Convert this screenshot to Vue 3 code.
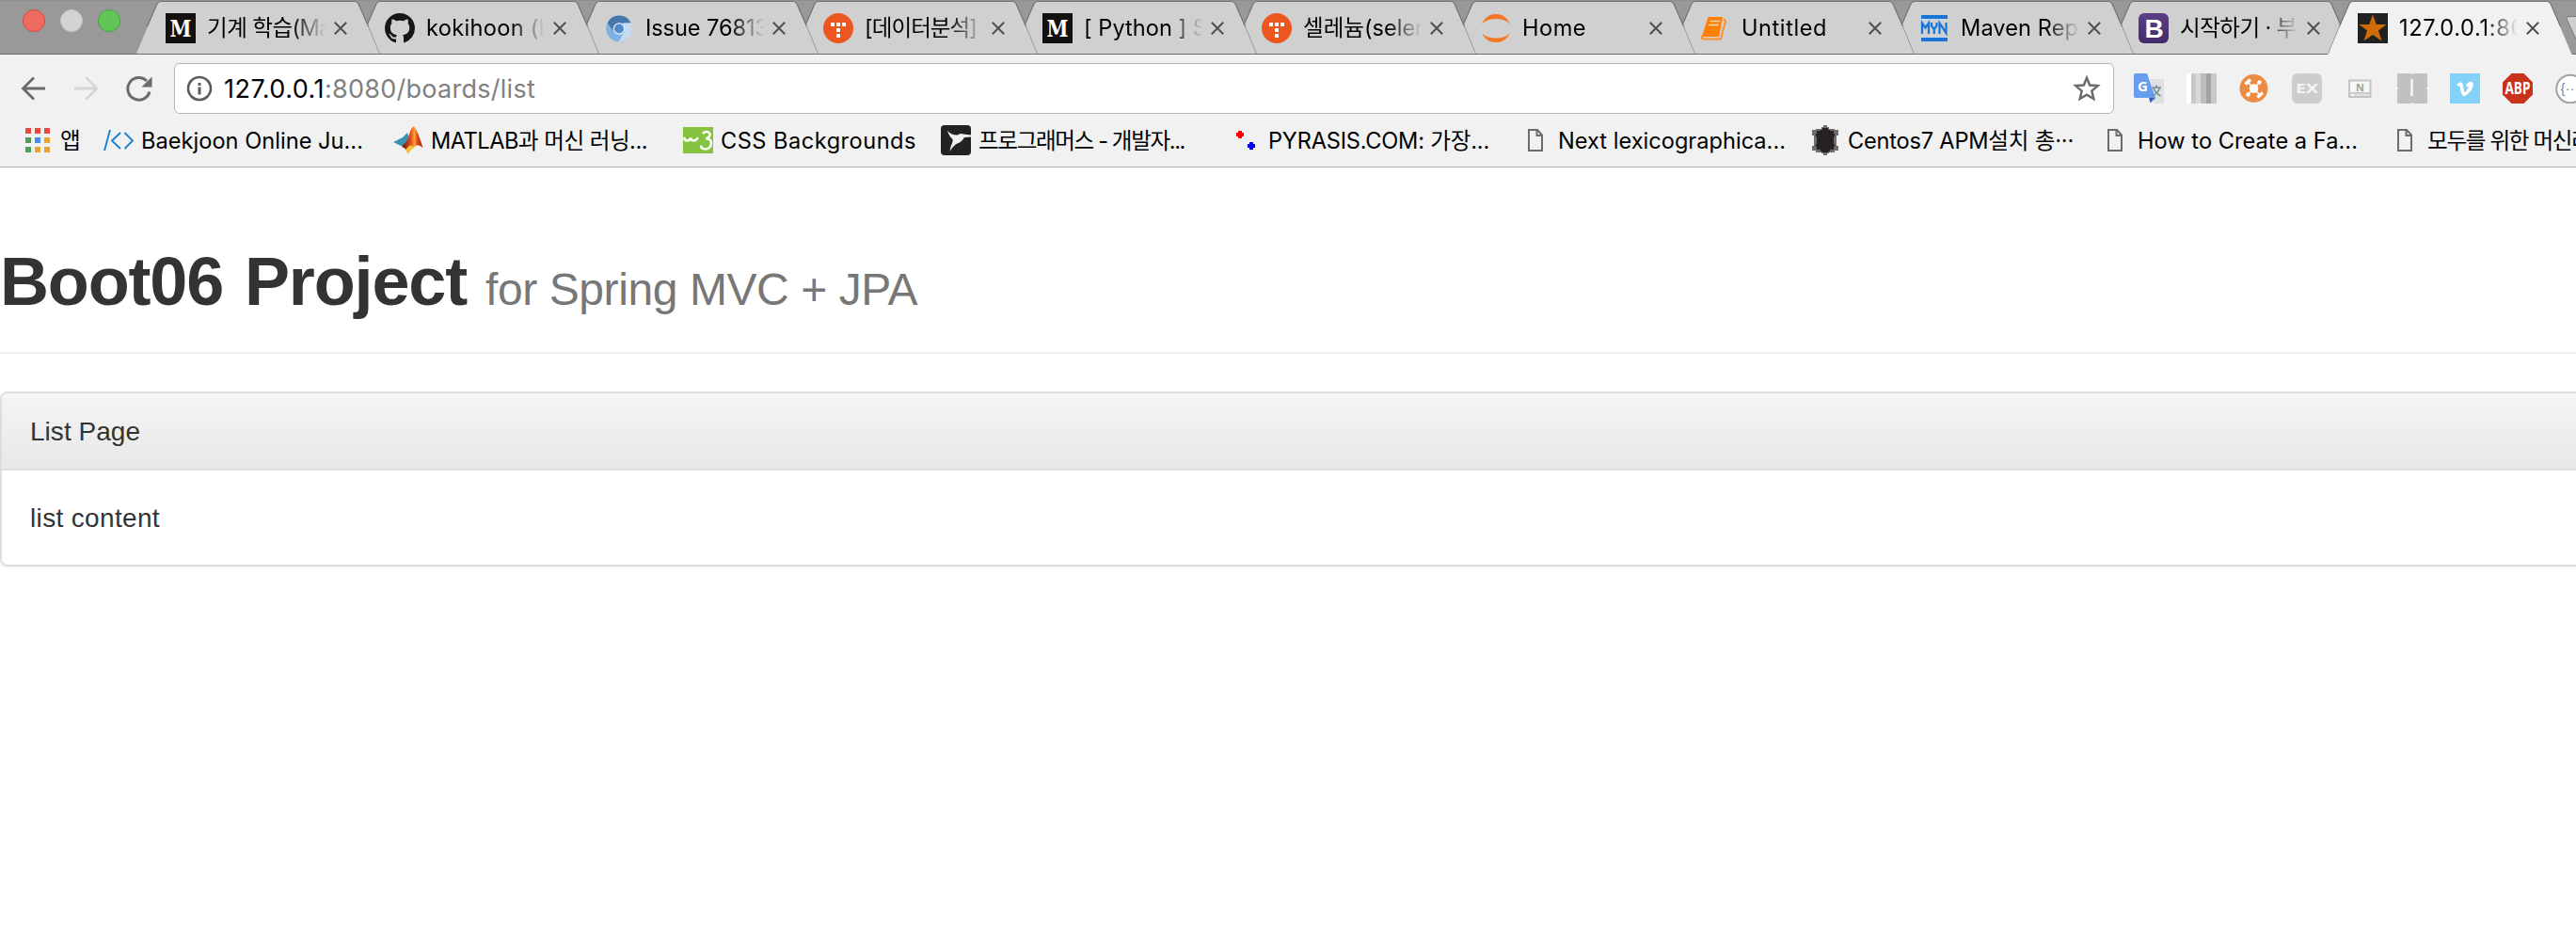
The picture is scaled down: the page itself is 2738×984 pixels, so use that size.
<script setup>
const icons = {
  medium: '<rect width="32" height="32" fill="#12110f"/><text x="16" y="24.5" font-size="24" font-weight="700" font-family="DejaVu Serif, serif" fill="#fff" text-anchor="middle" textLength="23" lengthAdjust="spacingAndGlyphs">M</text>',
  github: '<path transform="scale(2)" fill="#181616" d="M8 0C3.58 0 0 3.58 0 8c0 3.54 2.29 6.53 5.47 7.59.4.07.55-.17.55-.38 0-.19-.01-.82-.01-1.49-2.01.37-2.53-.49-2.69-.94-.09-.23-.48-.94-.82-1.13-.28-.15-.68-.52-.01-.53.63-.01 1.08.58 1.23.82.72 1.21 1.87.87 2.33.66.07-.52.28-.87.51-1.07-1.78-.2-3.64-.89-3.64-3.95 0-.87.31-1.59.82-2.15-.08-.2-.36-1.02.08-2.12 0 0 .67-.21 2.2.82.64-.18 1.32-.27 2-.27.68 0 1.36.09 2 .27 1.53-1.04 2.2-.82 2.2-.82.44 1.1.16 1.92.08 2.12.51.56.82 1.27.82 2.15 0 3.07-1.87 3.75-3.65 3.95.29.25.54.73.54 1.48 0 1.07-.01 1.93-.01 2.2 0 .21.15.46.55.38A8.013 8.013 0 0016 8c0-4.42-3.58-8-8-8z"/>',
  chromium: '<circle cx="16" cy="16.5" r="13.8" fill="#7eb0e0"/><path d="M3.6 10.5A13.8 13.8 0 0 1 28.6 10.5H16L10 19z" fill="#4677ab"/><path d="M28.6 10.5A13.8 13.8 0 0 1 15.5 30.3L22 19.5 20.5 10.5z" fill="#c5dbf0"/><circle cx="16" cy="16.5" r="6.3" fill="#e3eef8"/><circle cx="16" cy="16.5" r="5" fill="#4f8acb"/>',
  tistory: '<circle cx="16" cy="16" r="16" fill="#ec571f"/><path fill="#fff" d="M8 10h4v4h-4zM14 10h4v4h-4zM20 10h4v4h-4zM14 16h4v4h-4zM14 22h4v4h-4z"/>',
  jupyter: '<path fill="#f37726" d="M1 11.500C4.500 4 9.500 1 16 1s11.500 3 15 10.500C27 7.800 22 6 16 6S5 7.800 1 11.500zM1 21.500C5 25 10 26.500 16 26.500s11-1.500 15-5C27.500 28 22.500 31 16 31S4.500 28 1 21.500z"/>',
  book: '<path d="M8.500 4H24L20 25H2z" fill="#ff8000"/><path d="M25 6.500l2 2-5 19H3.500Q1 27 2 24" fill="none" stroke="#ff8f26" stroke-width="2"/><path d="M10.500 8.500H21M9.500 12.500H20" stroke="#ead8c3" stroke-width="1.6"/>',
  maven: '<path d="M2 2h28v4H2zM2 26h28v4H2z" fill="#1976d8"/><path d="M2 6h28v1H2zM2 24.500h28v1.500H2z" fill="#c7d7e8"/><path d="M3 22V10.500L6.500 15.500L10 10.500V22M13 10V13.500L15.800 17L18.500 13.500V10M15.800 16V22M21.500 22V10.500L28.500 21V10" fill="none" stroke="#1976d8" stroke-width="2.200"/>',
  bootstrap: '<defs><linearGradient id="boot" x2="0" y2="1"><stop stop-color="#5c3f86"/><stop offset="1" stop-color="#432a69"/></linearGradient></defs><rect width="32" height="32" rx="6" fill="url(#boot)"/><text x="16.500" y="26" text-anchor="middle" font-family="Liberation Sans, sans-serif" font-weight="700" font-size="28" fill="#fff">B</text>',
  star: '<rect width="32" height="32" fill="#212121"/><path d="M16 1.500L19.800 12H30.500L22 18.500L25.500 29.500L16 23L6.500 29.500L10 18.500L1.500 12H12.200z" fill="#ce6c08"/>',
  apps: '<path fill="#e34b41" d="M1 3h6v6H1zM11 3h6v6h-6zM21 3h6v6h-6z"/><path fill="#539b5c" d="M1 13h6v6H1zM1 23h6v6H1z"/><path fill="#448bf0" d="M11 13h6v6h-6z"/><path fill="#e6a435" d="M21 13h6v6h-6zM11 23h6v6h-6zM21 23h6v6h-6z"/>',
  code: '<path d="M7 5L1 27M18 8L9 16.500L18 25M22.500 8L31 16.500L22.500 25" fill="none" stroke="#1583cc" stroke-width="1.9"/>',
  matlab: '<defs><linearGradient id="mat"><stop stop-color="#68150c"/><stop offset=".45" stop-color="#e8531c"/><stop offset=".6" stop-color="#ffa33b"/><stop offset=".75" stop-color="#d8461a"/><stop offset="1" stop-color="#a7240f"/></linearGradient></defs><path d="M0 18L10 13L15 8L17 14L12 21L8 22z" fill="#3793b2"/><path d="M10 21Q14 19 16 13Q19 2 22 1Q26 6 31.500 24Q27 20 24 22Q18 26 15.500 30Q13 24 9 23z" fill="url(#mat)"/><path d="M13 26L15.500 30Q18 26 22 23.500L18 21z" fill="#ffc032"/>',
  w3: '<rect y="2" width="32" height="28" fill="#86c440"/><path d="M1 13q1 4 4 3.500q2.500-.5 3-3q.5 3 3.500 3q3 0 4-3.500M21 9q2-3 6-1.500q3 2 .5 5l-3 2q5-.5 5.500 4.500q-.5 6-6 6.500q-5 0-5-4" fill="none" stroke="#fff" stroke-width="2.400"/>',
  bird: '<rect width="32" height="32" rx="4" fill="#222"/><path d="M7 6Q12 11 18 10.500Q20 8 24 9.500L32 10.500V12.500L25 13Q23 17 20 18.500Q14 20 9.500 28Q10 23 12 19Q13 17 12.500 15Q9 12 7 6z" fill="#f2f2f2"/>',
  dots: '<path fill="#f00" d="M8 6h4v2h2v4h-2v2H8v-2H6V8h2z"/><path fill="#00f" d="M20 18h4v2h2v4h-2v2h-4v-2h-2v-4h2z"/>',
  page: '<path d="M9 5H18L23 10.500V27H9zM17.500 5V11H23" fill="none" stroke="#6c6c6c" stroke-width="2"/>',
  turtle: '<path d="M12 2h2V0h4v2h2v2h6v1h4v6h-2v11h2v5h-4v2h-6v1h-2v2h-4v-2h-2v-1H6v-2H2v-5h2V11H2V5h4V4h6z" fill="#6f6c6e"/><path d="M11 5h2V3h6v2h2v1h4v3h1v3h-1v8h1v3h-1v3h-4v2h-2v1h-6v-1h-2v-2H7v-3H6v-3h1v-8H6V9h1V6h4z" fill="#262223"/>',
  translate: '<path d="M17 6h15v26H21z" fill="#dfe0e1"/><path d="M0 2Q0 0 2 0H14L23 26H2Q0 26 0 24z" fill="#679cee"/><path d="M16 26H23L17.500 31.500z" fill="#3b65bd"/><text x="4" y="19" font-family="Open Sans, sans-serif" font-size="15" font-weight="700" fill="#fff">G</text><path d="M19.500 15H29M24 12.500V15M21 15.500Q23 21 28.500 24M27.500 15.500Q25 21.500 20 24" stroke="#74909b" stroke-width="1.6" fill="none"/>',
  bars: '<path fill="#fff" d="M0 0h5v32H0z"/><path fill="#c9c9c9" d="M5 0h5v32H5z"/><path fill="#dadada" d="M10 0h5v32h-5z"/><path fill="#bdbdbd" d="M15 0h6v32h-6z"/><path fill="#a2a2a2" d="M21 0h5v32h-5z"/><path fill="#c8c8c8" d="M26 0h6v32h-6z"/>',
  orange: '<circle cx="15.500" cy="16" r="15" fill="#ec8b44"/><circle cx="15.500" cy="16" r="4.800" fill="#fff"/><path d="M9 9L22 23M22 9L9 23" stroke="#fff" stroke-width="1.500"/><path d="M6.500 11.500L12 6.500M19.500 25.500L25 20.500" stroke="#fff" stroke-width="3.600"/><circle cx="21.500" cy="9.500" r="2.200" fill="#fff"/><circle cx="9.500" cy="22.500" r="2.200" fill="#fff"/>',
  ex: '<rect width="32" height="32" rx="6" fill="#cdcdcd"/><text x="4" y="21" textLength="24" lengthAdjust="spacingAndGlyphs" font-family="Open Sans, sans-serif" font-weight="700" font-size="14" fill="#f4f4f4">EX</text>',
  note: '<path d="M5 7.500h22.500V25H5zM5 21h22.500" fill="#f6f6f6" stroke="#c4c4c4" stroke-width="2"/><path d="M6 21.500H26.500V24H6z" fill="#dedede"/><text x="12" y="18.500" font-family="Open Sans, sans-serif" font-weight="700" font-size="11" fill="#a0a0a0">N</text><circle cx="8.500" cy="23" r="1.2" fill="#fff"/>',
  info: '<path d="M1 0H15V1H17V0H31L32 1V15H31V17H32V31L31 32H17V31H15V32H1L0 31V17H1V15H0V1z" fill="#c1c1c1"/><path d="M15.500 6V24" stroke="#f4f4f4" stroke-width="2.600"/>',
  vimeo: '<rect width="32" height="32" fill="#83d1f8"/><path d="M7 12Q12 7 13.500 11L15 19Q16 22 19.500 15Q20 13 17 13.500Q19 8 23 9Q27 11 22.500 18Q17 25 14 24Q11.500 22 10.500 13.500L8 13.500z" fill="#fff"/>',
  abp: '<path d="M9.500 0h13L32 9.500v13L22.500 32h-13L0 22.500v-13z" fill="#c9321b"/><text x="2.500" y="21.800" textLength="27" lengthAdjust="spacingAndGlyphs" font-family="Open Sans, sans-serif" font-weight="700" font-size="17" fill="#fff">ABP</text>',
  json: '<circle cx="16" cy="16.500" r="14.800" fill="#fff" stroke="#a1a1a1" stroke-width="2"/><text x="5.500" y="20.500" font-family="Liberation Sans, sans-serif" font-size="15" fill="#888">{···}</text>',
}

const tabs = [
  { icon: 'medium', title: '기계 학습(Ma', w: 132 },
  { icon: 'github', title: 'kokihoon (h', w: 134 },
  { icon: 'chromium', title: 'Issue 76813', w: 131 },
  { icon: 'tistory', title: '[데이터분석]', w: 119 },
  { icon: 'medium', title: '[ Python ] S', w: 131 },
  { icon: 'tistory', title: '셀레늄(selen', w: 133 },
  { icon: 'jupyter', title: 'Home', w: 68 },
  { icon: 'book', title: 'Untitled', w: 91 },
  { icon: 'maven', title: 'Maven Rep', w: 125 },
  { icon: 'bootstrap', title: '시작하기 · 부', w: 124 },
  { icon: 'star', title: '127.0.0.1:80', w: 134, active: true },
]

const bookmarks = [
  { icon: 'apps', title: '앱', w: 20, kind: 'apps' },
  { icon: 'code', title: 'Baekjoon Online Ju...', w: 236 },
  { icon: 'matlab', title: 'MATLAB과 머신 러닝...', w: 230 },
  { icon: 'w3', title: 'CSS Backgrounds', w: 208, kind: 'short' },
  { icon: 'bird', title: '프로그래머스 - 개발자...', w: 219 },
  { icon: 'dots', title: 'PYRASIS.COM: 가장...', w: 235 },
  { icon: 'page', title: 'Next lexicographica...', w: 242 },
  { icon: 'turtle', title: 'Centos7 APM설치 총···', w: 240 },
  { icon: 'page', title: 'How to Create a Fa...', w: 234 },
  { icon: 'page', title: '모두를 위한 머신러닝', w: 194 },
]

const extensions = ['translate', 'bars', 'orange', 'ex', 'note', 'info', 'vimeo', 'abp', 'json']

// Tracks the label so that it occupies the given width.
const vFit = {
  mounted(el, { value }) {
    const natural = el.getBoundingClientRect().width
    el.style.letterSpacing = `${(value - natural) / el.textContent.length}px`
  },
}
</script>

<template>
  <div class="window">
    <header class="strip">
      <div class="lights"><i class="light red"></i><i class="light gray"></i><i class="light green"></i></div>
      <ul class="tabs">
        <li v-for="(tab, i) in tabs" :key="i" class="tab" :class="{ active: tab.active }" :style="{ zIndex: tab.active ? 30 : 20 - i }">
          <svg class="shape" viewBox="0 0 260 58">
            <path class="fill" d="M0 58L23 4Q24.500 1.500 27 1.500H233Q235.500 1.500 237 4L260 58z" />
            <path class="lower" d="M.5 57L12.500 28M247.500 28L259.500 57" />
            <path class="upper" d="M12.500 28L23 4Q24.500 1.500 27 1.500H233Q235.500 1.500 237 4L247.500 28" />
          </svg>
          <svg class="icon" viewBox="0 0 32 32" v-html="icons[tab.icon]"></svg>
          <span class="clip"><span v-fit="tab.w" class="label">{{ tab.title }}</span></span>
          <svg class="close" viewBox="0 0 14 14"><path d="M.8.800L13.200 13.200M13.200.800L.8 13.200" /></svg>
        </li>
      </ul>
      <svg class="newtab" viewBox="0 0 40 28"><path d="M12 27L1 3Q.5.500 4 .5H40V27z" /></svg>
    </header>

    <div class="toolbar">
      <svg class="nav" viewBox="0 0 28 28"><path d="M26 14H3M14 2.500L2.500 14L14 25.500" /></svg>
      <svg class="nav off" viewBox="0 0 28 28"><path d="M1 14H25M13.500 2.500L25 14L13.500 25.500" /></svg>
      <svg class="nav" viewBox="0 0 28 28">
        <path class="arc" d="M25 17.500A11.800 11.800 0 1 1 22 6" />
        <path class="head" d="M27.500 1.500V12.500H16.500z" />
      </svg>
      <div class="omnibox">
        <svg class="info" viewBox="0 0 28 28"><circle cx="14" cy="14" r="12" /><path d="M14 12.500V20.500M14 8V11" /></svg>
        <span v-fit="107" class="host">127.0.0.1</span><span v-fit="224" class="path">:8080/boards/list</span>
        <svg class="fav" viewBox="0 0 28 28"><path d="M14 3.500L17 10.700L25 11.300L19 16.500L20.800 24.300L14 20.200L7.200 24.300L9 16.500L3 11.300L11 10.700z" /></svg>
      </div>
      <div class="exts">
        <svg v-for="name in extensions" :key="name" class="icon" viewBox="0 0 32 32" v-html="icons[name]"></svg>
      </div>
    </div>

    <nav class="bookmarks">
      <a v-for="(mark, i) in bookmarks" :key="i" class="mark" :class="mark.kind">
        <svg class="icon" viewBox="0 0 32 32" v-html="icons[mark.icon]"></svg>
        <span v-fit="mark.w" class="label">{{ mark.title }}</span>
      </a>
    </nav>

    <main class="page">
      <div class="page-header">
        <h1><span v-fit="496">Boot06 Project</span><small v-fit="459">for Spring MVC + JPA</small></h1>
      </div>
      <section class="panel">
        <div class="panel-heading"><span v-fit="117">List Page</span></div>
        <div class="panel-body"><span v-fit="138">list content</span></div>
      </section>
    </main>
  </div>
</template>

<style>
body { margin: 0; background: #fff; }
</style>

<style scoped>
.window { width: 2738px; height: 984px; overflow: hidden; background: #fff; font-family: Inter, "Noto Sans CJK KR", sans-serif; color: #000; }
.icon { width: 32px; height: 32px; flex: none; display: block; }
.label { display: inline-block; white-space: pre; flex: none; }

.strip { height: 58px; box-sizing: border-box; position: relative; display: flex; background: #999; border-bottom: 1px solid #6b6b6b; border-top: 1px solid #8f8f8f; }
.lights { width: 144px; box-sizing: border-box; padding: 9px 0 0 24px; display: flex; gap: 16px; flex: none; }
.light { width: 24px; height: 24px; box-sizing: border-box; border-radius: 50%; border: 1px solid; }
.red { background: #ef6b60; border-color: #d9483f; }
.gray { background: #d3d3d3; border-color: #c4c4c4; }
.green { background: #62c656; border-color: #43a63a; }
.tabs { list-style: none; margin: -1px 0 0; padding: 0; display: flex; flex: none; height: 58px; }
.tab { width: 260px; height: 57px; box-sizing: border-box; padding: 3px 0 0 32px; display: flex; align-items: center; position: relative; flex: none; }
.tab + .tab { margin-left: -27px; }
.tab.active { height: 58px; padding-top: 2px; }
.tab .icon, .clip, .close { position: relative; }
.shape { position: absolute; left: 0; top: 0; width: 260px; height: 58px; clip-path: inset(0 0 1px 0); }
.active .shape { clip-path: none; }
.fill { fill: #d0d0d0; }
.active .fill { fill: #f1f1f1; }
.upper { fill: none; stroke: #737373; stroke-width: 1.2; }
.lower { fill: none; stroke: #9a9a9a; stroke-width: 1; }
.clip { width: 128px; margin-left: 12px; height: 40px; line-height: 40px; overflow: hidden; flex: none; font-size: 23.6px; mask-image: linear-gradient(90deg, #000 90px, transparent 126px); }
.close { width: 14px; height: 14px; margin-left: 7px; flex: none; overflow: visible; }
.close path { fill: none; stroke: #505050; stroke-width: 2; }
.newtab { width: 40px; height: 28px; margin: 16px 0 0 -7px; flex: none; }
.newtab path { fill: #cfcfcf; stroke: #777; }

.toolbar { height: 63px; padding: 9px 0 0 22px; box-sizing: border-box; background: #f1f1f1; display: flex; align-items: center; }
.nav { width: 28px; height: 28px; margin-right: 28px; flex: none; overflow: visible; }
.nav + .nav + .nav { margin-right: 23px; }
.nav path { fill: none; stroke: #6a6a6a; stroke-width: 2.8; }
.nav.off path { stroke: #d6d6d6; }
.nav .arc { stroke-width: 3; }
.nav .head { fill: #6a6a6a; stroke: none; }
.omnibox { width: 2062px; height: 54px; box-sizing: border-box; border: 1px solid #b5b5b5; border-radius: 6px; background: #fff; display: flex; align-items: center; padding: 0 13px 0 12px; flex: none; font-size: 27px; }
.info { width: 28px; height: 28px; margin-right: 12px; flex: none; }
.info circle { fill: none; stroke: #5c5c5c; stroke-width: 2.6; }
.info path { stroke: #5c5c5c; stroke-width: 3; }
.host, .path { white-space: pre; flex: none; line-height: 40px; padding-top: 2px; }
.path { color: #808080; }
.fav { width: 30px; height: 30px; margin-left: auto; }
.fav path { fill: none; stroke: #6a6a6a; stroke-width: 2.3; }
.exts { display: flex; gap: 24px; margin-left: 21px; flex: none; }

.bookmarks { height: 57px; box-sizing: border-box; border-bottom: 1px solid #b3b3b3; background: #f1f1f1; display: flex; align-items: center; padding: 0 0 1px 26px; font-size: 23.6px; overflow: hidden; }
.mark { width: 308px; display: flex; align-items: center; flex: none; line-height: 40px; }
.mark .label { margin-left: 8px; padding-top: 2px; }
.mark.apps { width: 84px; }
.mark.apps .label { margin-left: 6px; }
.mark.short { width: 274px; }

.page { font-family: "Liberation Sans", Arial, sans-serif; color: #333; }
.page-header { height: 198px; box-sizing: border-box; border-bottom: 2px solid #eee; padding-top: 81px; }
h1 { margin: 0; font-size: 72px; line-height: 80px; font-weight: 700; color: #333; display: flex; align-items: baseline; white-space: pre; }
h1 span { word-spacing: 4px; }
h1 small { margin-left: 20px; font-size: 48px; font-weight: 400; color: #777; line-height: 1; }
.panel { margin: 40px -8px 0 0; height: 186px; box-sizing: border-box; border: 2px solid #ddd; border-radius: 8px; box-shadow: 0 2px 4px rgba(0, 0, 0, .05); font-size: 28px; line-height: 40px; overflow: hidden; white-space: pre; }
.panel-heading { height: 82px; box-sizing: border-box; padding: 21px 30px 19px; border-bottom: 2px solid #ddd; background: linear-gradient(#f5f5f5, #e8e8e8); }
.panel-body { padding: 31px 30px; }
</style>
